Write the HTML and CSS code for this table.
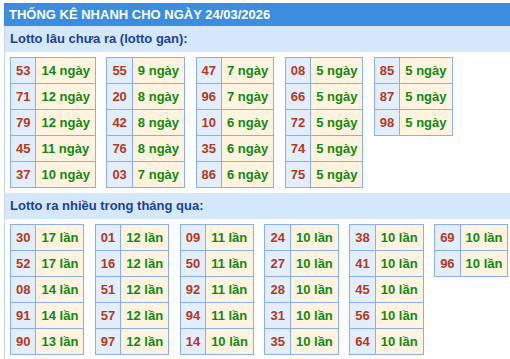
FILE: index.html
```html
<!DOCTYPE html>
<html lang="vi">
<head>
<meta charset="utf-8">
<title>Thống kê nhanh</title>
<link rel="stylesheet" href="styles.css">
</head>
<body>
<div class="box">
  <div class="title">THỐNG KÊ NHANH CHO NGÀY 24/03/2026</div>
  <div class="content">
    <div class="subtitle">Lotto lâu chưa ra (lotto gan):</div>
    <div class="tables">
      <table class="stat"><tbody>
        <tr><td class="num">53</td><td class="val">14 ngày</td></tr>
        <tr><td class="num">71</td><td class="val">12 ngày</td></tr>
        <tr><td class="num">79</td><td class="val">12 ngày</td></tr>
        <tr><td class="num">45</td><td class="val">11 ngày</td></tr>
        <tr><td class="num">37</td><td class="val">10 ngày</td></tr>
      </tbody></table>
      <table class="stat"><tbody>
        <tr><td class="num">55</td><td class="val">9 ngày</td></tr>
        <tr><td class="num">20</td><td class="val">8 ngày</td></tr>
        <tr><td class="num">42</td><td class="val">8 ngày</td></tr>
        <tr><td class="num">76</td><td class="val">8 ngày</td></tr>
        <tr><td class="num">03</td><td class="val">7 ngày</td></tr>
      </tbody></table>
      <table class="stat"><tbody>
        <tr><td class="num">47</td><td class="val">7 ngày</td></tr>
        <tr><td class="num">96</td><td class="val">7 ngày</td></tr>
        <tr><td class="num">10</td><td class="val">6 ngày</td></tr>
        <tr><td class="num">35</td><td class="val">6 ngày</td></tr>
        <tr><td class="num">86</td><td class="val">6 ngày</td></tr>
      </tbody></table>
      <table class="stat"><tbody>
        <tr><td class="num">08</td><td class="val">5 ngày</td></tr>
        <tr><td class="num">66</td><td class="val">5 ngày</td></tr>
        <tr><td class="num">72</td><td class="val">5 ngày</td></tr>
        <tr><td class="num">74</td><td class="val">5 ngày</td></tr>
        <tr><td class="num">75</td><td class="val">5 ngày</td></tr>
      </tbody></table>
      <table class="stat"><tbody>
        <tr><td class="num">85</td><td class="val">5 ngày</td></tr>
        <tr><td class="num">87</td><td class="val">5 ngày</td></tr>
        <tr><td class="num">98</td><td class="val">5 ngày</td></tr>
      </tbody></table>
    </div>
    <div class="subtitle">Lotto ra nhiều trong tháng qua:</div>
    <div class="tables">
      <table class="stat"><tbody>
        <tr><td class="num">30</td><td class="val">17 lần</td></tr>
        <tr><td class="num">52</td><td class="val">17 lần</td></tr>
        <tr><td class="num">08</td><td class="val">14 lần</td></tr>
        <tr><td class="num">91</td><td class="val">14 lần</td></tr>
        <tr><td class="num">90</td><td class="val">13 lần</td></tr>
      </tbody></table>
      <table class="stat"><tbody>
        <tr><td class="num">01</td><td class="val">12 lần</td></tr>
        <tr><td class="num">16</td><td class="val">12 lần</td></tr>
        <tr><td class="num">51</td><td class="val">12 lần</td></tr>
        <tr><td class="num">57</td><td class="val">12 lần</td></tr>
        <tr><td class="num">97</td><td class="val">12 lần</td></tr>
      </tbody></table>
      <table class="stat"><tbody>
        <tr><td class="num">09</td><td class="val">11 lần</td></tr>
        <tr><td class="num">50</td><td class="val">11 lần</td></tr>
        <tr><td class="num">92</td><td class="val">11 lần</td></tr>
        <tr><td class="num">94</td><td class="val">11 lần</td></tr>
        <tr><td class="num">14</td><td class="val">10 lần</td></tr>
      </tbody></table>
      <table class="stat"><tbody>
        <tr><td class="num">24</td><td class="val">10 lần</td></tr>
        <tr><td class="num">27</td><td class="val">10 lần</td></tr>
        <tr><td class="num">28</td><td class="val">10 lần</td></tr>
        <tr><td class="num">31</td><td class="val">10 lần</td></tr>
        <tr><td class="num">35</td><td class="val">10 lần</td></tr>
      </tbody></table>
      <table class="stat"><tbody>
        <tr><td class="num">38</td><td class="val">10 lần</td></tr>
        <tr><td class="num">41</td><td class="val">10 lần</td></tr>
        <tr><td class="num">45</td><td class="val">10 lần</td></tr>
        <tr><td class="num">56</td><td class="val">10 lần</td></tr>
        <tr><td class="num">64</td><td class="val">10 lần</td></tr>
      </tbody></table>
      <table class="stat"><tbody>
        <tr><td class="num">69</td><td class="val">10 lần</td></tr>
        <tr><td class="num">96</td><td class="val">10 lần</td></tr>
      </tbody></table>
    </div>
  </div>
</div>
</body>
</html>
```
FILE: styles.css
```css
html, body {
  margin: 0;
  padding: 0;
  background: #ffffff;
  overflow: hidden;
}
body {
  font-family: "Liberation Sans", Arial, sans-serif;
  font-size: 13px;
  font-weight: bold;
}
.box {
  margin: 3px 0 0 4px;
}
.title {
  background: #3c8de0;
  color: #ffffff;
  height: 23px;
  line-height: 23px;
  padding-left: 5px;
  white-space: nowrap;
}
.content {
  border-left: 1px solid #c9d7ef;
  padding-bottom: 6px;
}
.subtitle {
  background: #d5e8fb;
  color: #1c409c;
  height: 26px;
  line-height: 26px;
  padding-left: 5px;
}
.tables {
  display: flex;
  align-items: flex-start;
  gap: 10.5px;
  padding: 5px 0 5px 5px;
}
.stat {
  border-collapse: collapse;
}
.stat td {
  border: 1px solid #8cadf3;
  height: 15px;
  line-height: 15px;
  padding: 5px 5px;
  white-space: nowrap;
}
.num {
  background: #e3eefd;
  color: #b4391b;
  text-align: center;
}
.val {
  background: #fef3df;
  color: #118911;
}
```
